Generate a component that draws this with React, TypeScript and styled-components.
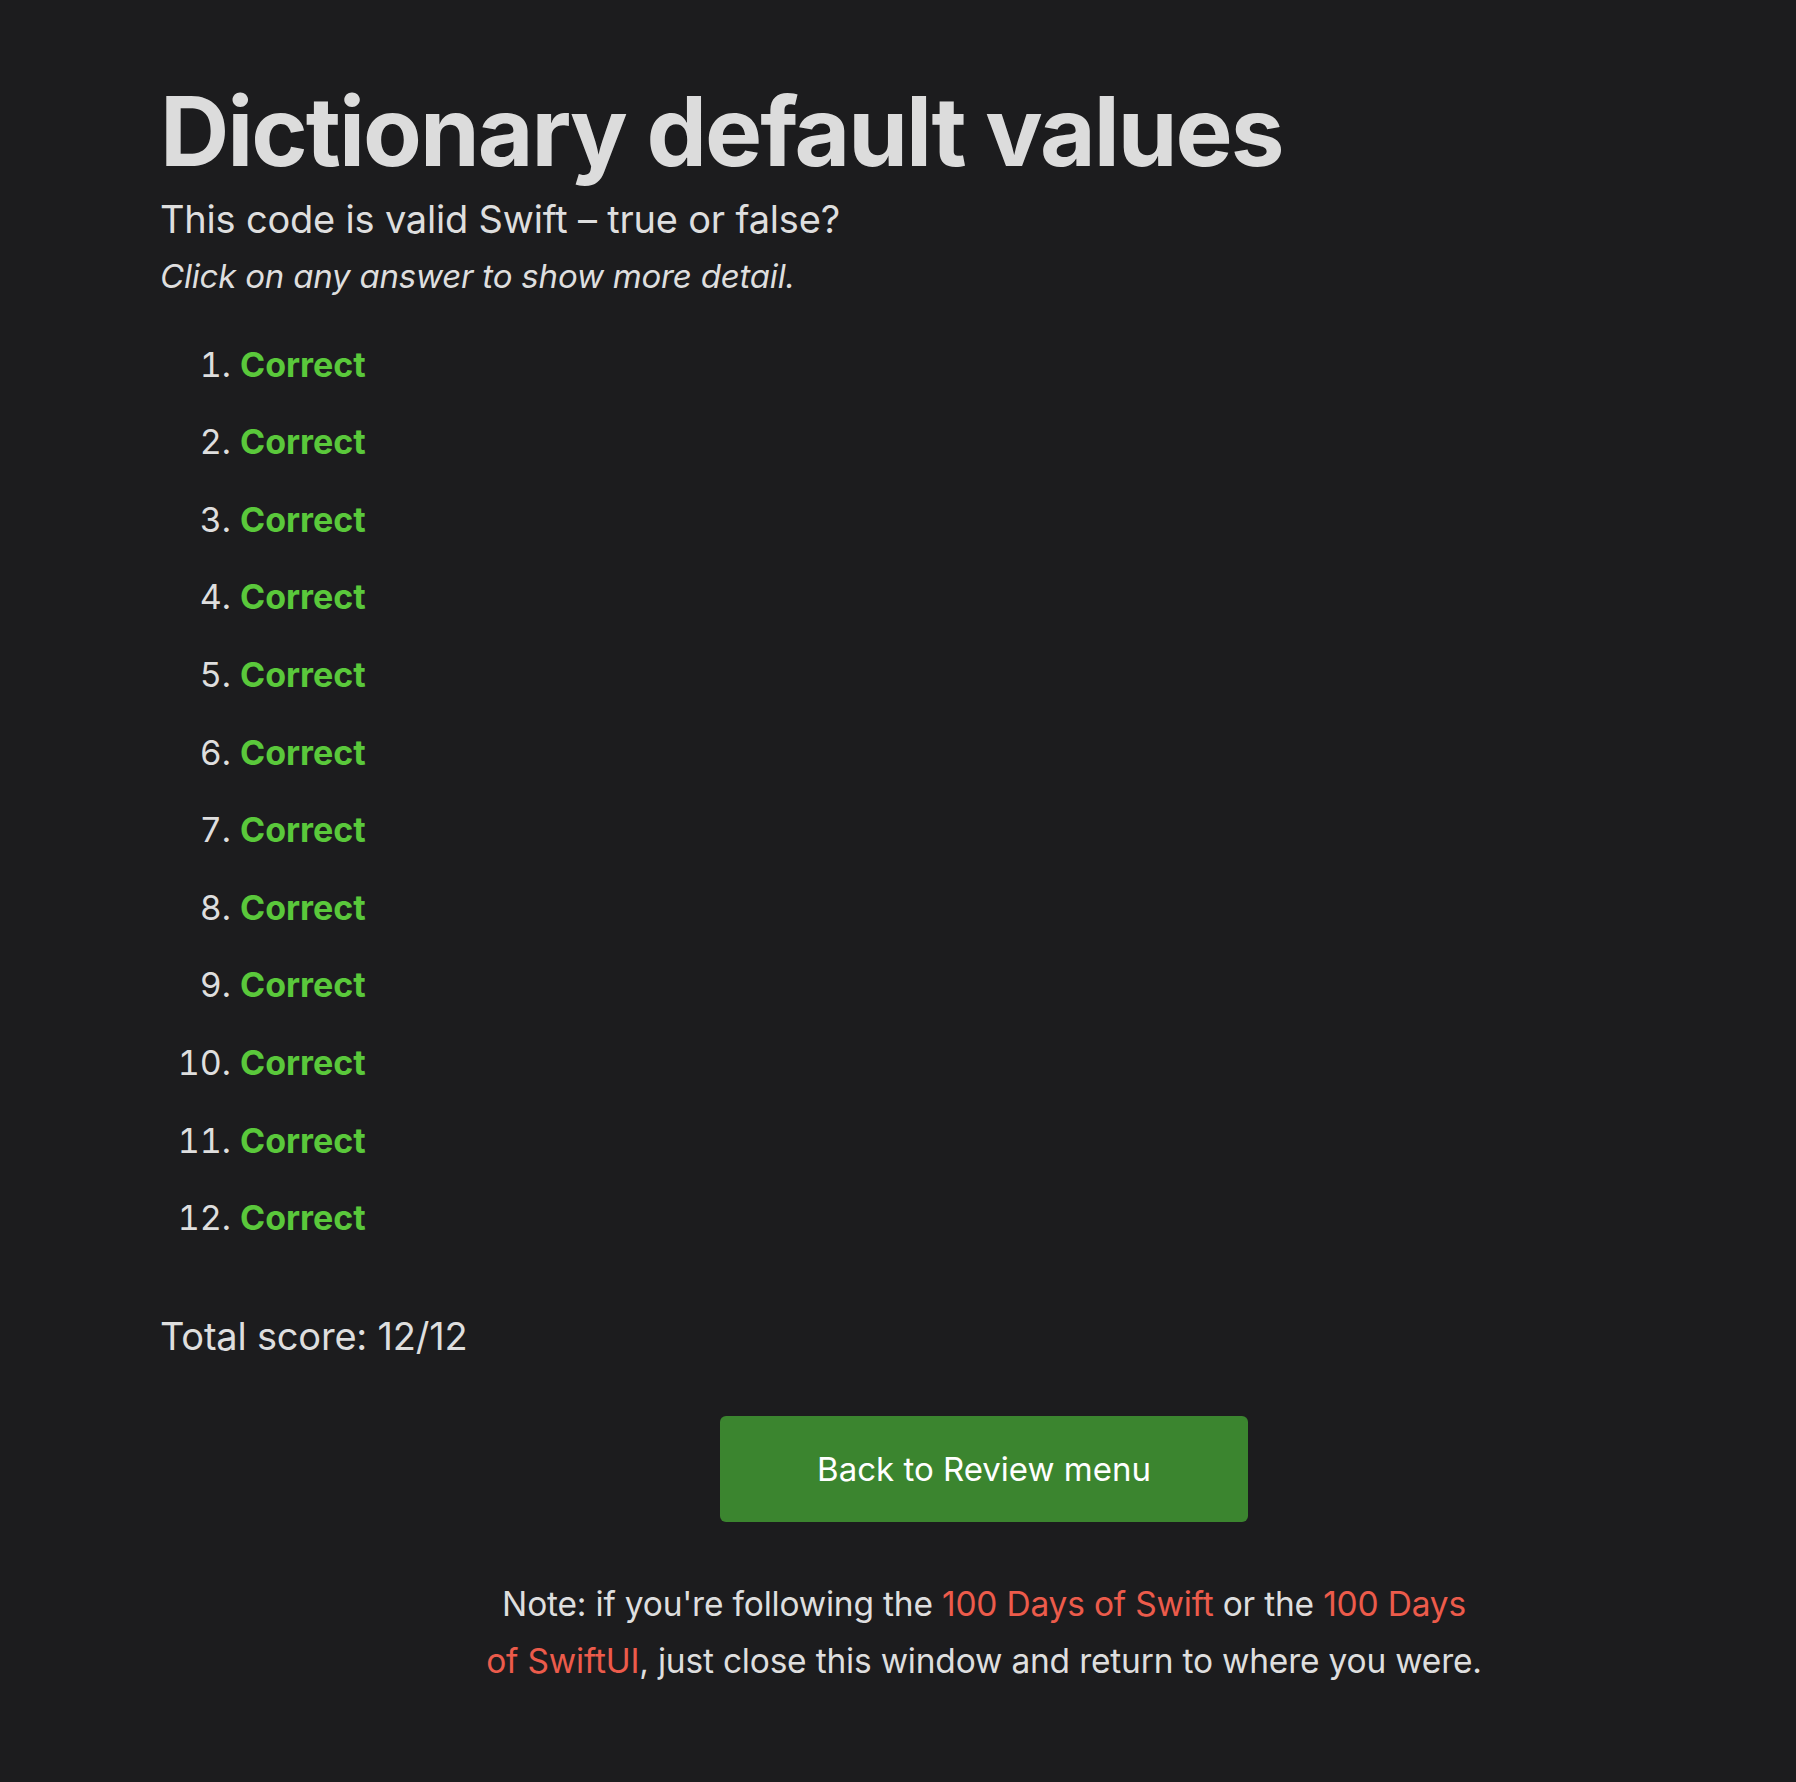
import styled, { createGlobalStyle } from "styled-components";

const GlobalStyle = createGlobalStyle`
  html, body {
    margin: 0;
    padding: 0;
    background: #1c1c1e;
  }
  body {
    font-family: "Inter", "Noto Sans", sans-serif;
    color: #dedede;
  }
`;

const Page = styled.main`
  min-height: 1782px;
  box-sizing: border-box;
  padding: 79px 0 0 160px;
`;

const Title = styled.h1`
  margin: 0;
  font-size: 96px;
  line-height: 1.1;
  font-weight: 700;
  letter-spacing: -2px;
  color: #dcdcdc;
`;

const Subtitle = styled.h2`
  margin: 13px 0 0;
  font-size: 38px;
  line-height: 43px;
  font-weight: 400;
  letter-spacing: -0.2px;
`;

const Hint = styled.p`
  margin: 16px 0 0;
  font-size: 33px;
  line-height: 38px;
  font-style: italic;
  letter-spacing: -0.2px;
`;

const AnswerList = styled.ol`
  margin: 48px 0 0;
  padding: 0 0 0 80px;
`;

const Answer = styled.li`
  font-size: 34px;
  line-height: 44px;
  margin-bottom: 33.6px;

  &:last-child {
    margin-bottom: 0;
  }
`;

const Result = styled.span<{ $correct: boolean }>`
  font-weight: 700;
  color: ${(p) => (p.$correct ? "#5ac83b" : "#e8574a")};
`;

const Score = styled.p`
  margin: 74px 0 0;
  font-size: 38px;
  line-height: 44px;
  letter-spacing: -0.2px;
`;

const Footer = styled.div`
  display: flex;
  flex-direction: column;
  align-items: center;
  padding-left: 12px;
`;

const BackButton = styled.button`
  margin-top: 58px;
  width: 528px;
  height: 106px;
  border: none;
  border-radius: 6px;
  background: #3b852f;
  color: #ffffff;
  font-family: "Inter", "Noto Sans", sans-serif;
  font-size: 33px;
  cursor: pointer;
`;

const Note = styled.p`
  margin: 54px 0 0;
  width: 1000px;
  text-align: center;
  font-size: 33.5px;
  line-height: 57px;
  letter-spacing: -0.2px;
`;

const NoteLink = styled.a`
  color: #ec5b4b;
  text-decoration: none;
`;

const answers = Array.from({ length: 12 }, () => true);

export default function App() {
  return (
    <>
      <GlobalStyle />
      <Page>
        <Title>Dictionary default values</Title>
        <Subtitle>This code is valid Swift – true or false?</Subtitle>
        <Hint>Click on any answer to show more detail.</Hint>
        <AnswerList>
          {answers.map((ok, i) => (
            <Answer key={i}>
              <Result $correct={ok}>{ok ? "Correct" : "Wrong"}</Result>
            </Answer>
          ))}
        </AnswerList>
        <Score>Total score: 12/12</Score>
        <Footer>
          <BackButton>Back to Review menu</BackButton>
          <Note>
            Note: if you're following the{" "}
            <NoteLink href="#">100 Days of Swift</NoteLink> or the{" "}
            <NoteLink href="#">100 Days of SwiftUI</NoteLink>, just close this
            window and return to where you were.
          </Note>
        </Footer>
      </Page>
    </>
  );
}
